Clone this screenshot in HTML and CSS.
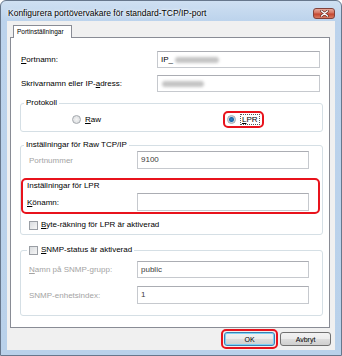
FILE: index.html
```html
<!DOCTYPE html>
<html>
<head>
    <meta charset="utf-8">
    <title>Konfigurera portövervakare</title>
    <link rel="stylesheet" href="styles.css">
</head>
<body>
    <div class="window">
        <div class="titlebar">
            <span class="title">Konfigurera portövervakare för standard-TCP/IP-port</span>
            <span class="close">
                <svg width="9" height="7" viewBox="0 0 9 7"><path d="M1.5 1 L7.5 6 M7.5 1 L1.5 6" stroke="#5a2a22" stroke-width="2.6" stroke-linecap="round"/><path d="M1.5 1 L7.5 6 M7.5 1 L1.5 6" stroke="#fff" stroke-width="1.4" stroke-linecap="round"/></svg>
            </span>
        </div>
        <div class="client">
            <div class="tabs"><span class="tab">Portinställningar</span></div>
            <div class="page">
                <div class="fields">
                    <label><u>P</u>ortnamn:</label>
                    <span class="box">IP_<span class="smudge s1"></span></span>
                    <label>Skrivarnamn eller IP-<u>a</u>dress:</label>
                    <span class="box"><span class="smudge s2"></span></span>
                </div>

                <fieldset class="group proto">
                    <legend>Protokoll</legend>
                    <div class="radios">
                        <span class="opt"><span class="radio"></span><span><u>R</u>aw</span></span>
                        <span class="mark">
                            <span class="opt"><span class="radio on"></span><span class="focus"><u>L</u>PR</span></span>
                        </span>
                    </div>
                </fieldset>

                <fieldset class="group raw">
                    <legend>Inställningar för Raw TCP/IP</legend>
                    <div class="frow">
                        <label class="off">Portnummer</label>
                        <span class="box dim">9100</span>
                    </div>
                    <div class="lpr">
                        <div class="lpr-title">Inställningar för LPR</div>
                        <div class="frow tight">
                            <label><u>K</u>önamn:</label>
                            <span class="box"></span>
                        </div>
                    </div>
                    <div class="check-row">
                        <span class="check"></span><span><u>B</u>yte-räkning för LPR är aktiverad</span>
                    </div>
                </fieldset>

                <fieldset class="group snmp">
                    <legend><span class="check"></span><span><u>S</u>NMP-status är aktiverad</span></legend>
                    <div class="frow">
                        <label class="off"><u>N</u>amn på SNMP-grupp:</label>
                        <span class="box dim">public</span>
                    </div>
                    <div class="frow gap">
                        <label class="off">SNMP-enhetsindex:</label>
                        <span class="box dim">1</span>
                    </div>
                </fieldset>
            </div>
            <div class="buttons">
                <span class="mark wide"><span class="btn default">OK</span></span>
                <span class="btn">Avbryt</span>
            </div>
        </div>
    </div>
</body>
</html>
```
FILE: styles.css
```css
*{
    box-sizing:border-box;
}
body{
    margin:0;
    font:8px "Liberation Sans", Arial, sans-serif;
    color:#000;
}
u{
    text-decoration:underline;
    text-underline-offset:1px;
}
.window{
    width:342px;
    height:356px;
    border:1px solid #67778c;
    border-radius:6px 6px 0 0;
    background:linear-gradient(#cfe0f2, #bcd3ec 20px, #b9d1ea);
    padding:0 6px 5px 6px;
    display:flex;
    flex-direction:column;
}
.titlebar{
    height:20px;
    display:flex;
    align-items:flex-start;
    justify-content:space-between;
    padding-left:1px;
}
.title{
    font-size:8.5px;
    margin-top:7px;
    text-shadow:0 0 4px #fff, 0 0 2px #fff;
}
.close{
    width:22px;
    height:11px;
    margin-top:7px;
    border:1px solid #82413a;
    border-radius:3px;
    background:linear-gradient(#e8a99b, #d4705c 45%, #c4442e 55%, #d87a60);
    display:flex;
    align-items:center;
    justify-content:center;
}
.client{
    flex:1;
    background:#f0f0f0;
    padding:4px 5px 0 3px;
    display:flex;
    flex-direction:column;
}
.tabs{
    height:12px;
    display:flex;
}
.tab{
    margin-left:3px;
    width:59px;
    height:13px;
    border:1px solid #898c95;
    border-bottom:none;
    background:#fff;
    font-size:6.5px;
    padding:2px 0 0 3px;
    position:relative;
    z-index:1;
}
.page{
    height:291px;
    border:1px solid #898c95;
    background:#fff;
    padding:13px 6px 0 9px;
}
.fields{
    display:grid;
    grid-template-columns:1fr 163px;
    row-gap:7px;
    align-items:center;
    margin-right:3px;
    padding-left:1px;
}
.box{
    display:block;
    height:17px;
    border:1px solid #c6c9ce;
    border-top-color:#abadb3;
    background:#fff;
    padding:3px 0 0 3px;
    line-height:10px;
    white-space:nowrap;
}
.dim{
    color:#3c3c3c;
}
.smudge{
    display:inline-block;
    height:6px;
    background:#c4c4c4;
    border-radius:3px;
    filter:blur(1.5px);
    vertical-align:middle;
}
.s1{
    width:44px;
    margin-left:2px;
}
.s2{
    width:42px;
    margin-left:1px;
}
.group{
    margin:0;
    border:1px solid #d5dfe5;
    border-radius:3px;
    min-width:0;
}
.group legend{
    line-height:10px;
    padding:0 2px;
    margin-left:3px;
}
.proto{
    margin-top:6px;
    padding:3px 0 3px 0;
}
.radios{
    display:grid;
    grid-template-columns:151px auto;
    align-items:center;
    padding-left:51px;
}
.opt{
    display:flex;
    align-items:center;
    gap:4px;
}
.radio{
    width:9px;
    height:9px;
    border-radius:50%;
    border:1px solid #a5a9ae;
    background:radial-gradient(#f4f4f4, #d6d9dc);
}
.radio.on{
    background:radial-gradient(#2b83c7 0, #1d6aa8 2px, #c7d4e0 3px, #e8ecf0 4px);
}
.focus{
    border:1px dotted #555;
    padding:0 1px;
    line-height:9px;
}
.mark{
    display:inline-flex;
    border:2px solid #e8131c;
    border-radius:5px;
    padding:1px 2px 1px 2px;
    height:17px;
    align-items:center;
    justify-self:start;
}
.raw{
    margin-top:8px;
    padding:1px 0 4px 0;
}
.frow{
    display:grid;
    grid-template-columns:108px 172px;
    align-items:center;
    padding-left:8px;
}
.frow .box{
    height:18px;
}
.off{
    color:#a3a3a3;
}
.lpr{
    margin:9px 2px 0 0;
    border:2px solid #e8131c;
    border-radius:5px;
    padding:1px 0 1px 4px;
}
.lpr-title{
    line-height:10px;
}
.frow.tight{
    grid-template-columns:110px 172px;
    padding-left:0;
    margin-top:2px;
}
.check-row{
    display:flex;
    align-items:center;
    gap:3px;
    margin-top:6px;
    padding-left:8px;
    line-height:10px;
}
.check{
    width:9px;
    height:9px;
    border:1px solid #9a9ea4;
    background:linear-gradient(135deg, #d9dcdf, #f6f6f6);
}
.snmp{
    margin-top:10px;
    padding:6px 0 11px 0;
}
.snmp legend{
    display:flex;
    align-items:center;
    gap:3px;
    margin-left:6px;
}
.snmp .frow .box{
    height:17px;
}
.frow.gap{
    margin-top:8px;
}
.frow.gap .box{
    height:18px;
}
.buttons{
    display:flex;
    justify-content:flex-end;
    align-items:center;
    gap:2px;
    margin:1px -1px 0 0;
}
.mark.wide{
    height:20px;
    padding:1px;
}
.btn{
    width:51px;
    height:14px;
    border:1px solid #707070;
    border-radius:3px;
    background:linear-gradient(#f2f2f2, #ebebeb 50%, #dddddd 50%, #cfcfcf);
    font-size:7px;
    display:flex;
    align-items:center;
    justify-content:center;
}
.btn.default{
    border-color:#3c7fb1;
    box-shadow:inset 0 0 0 1px #7fd3f5;
}
```
